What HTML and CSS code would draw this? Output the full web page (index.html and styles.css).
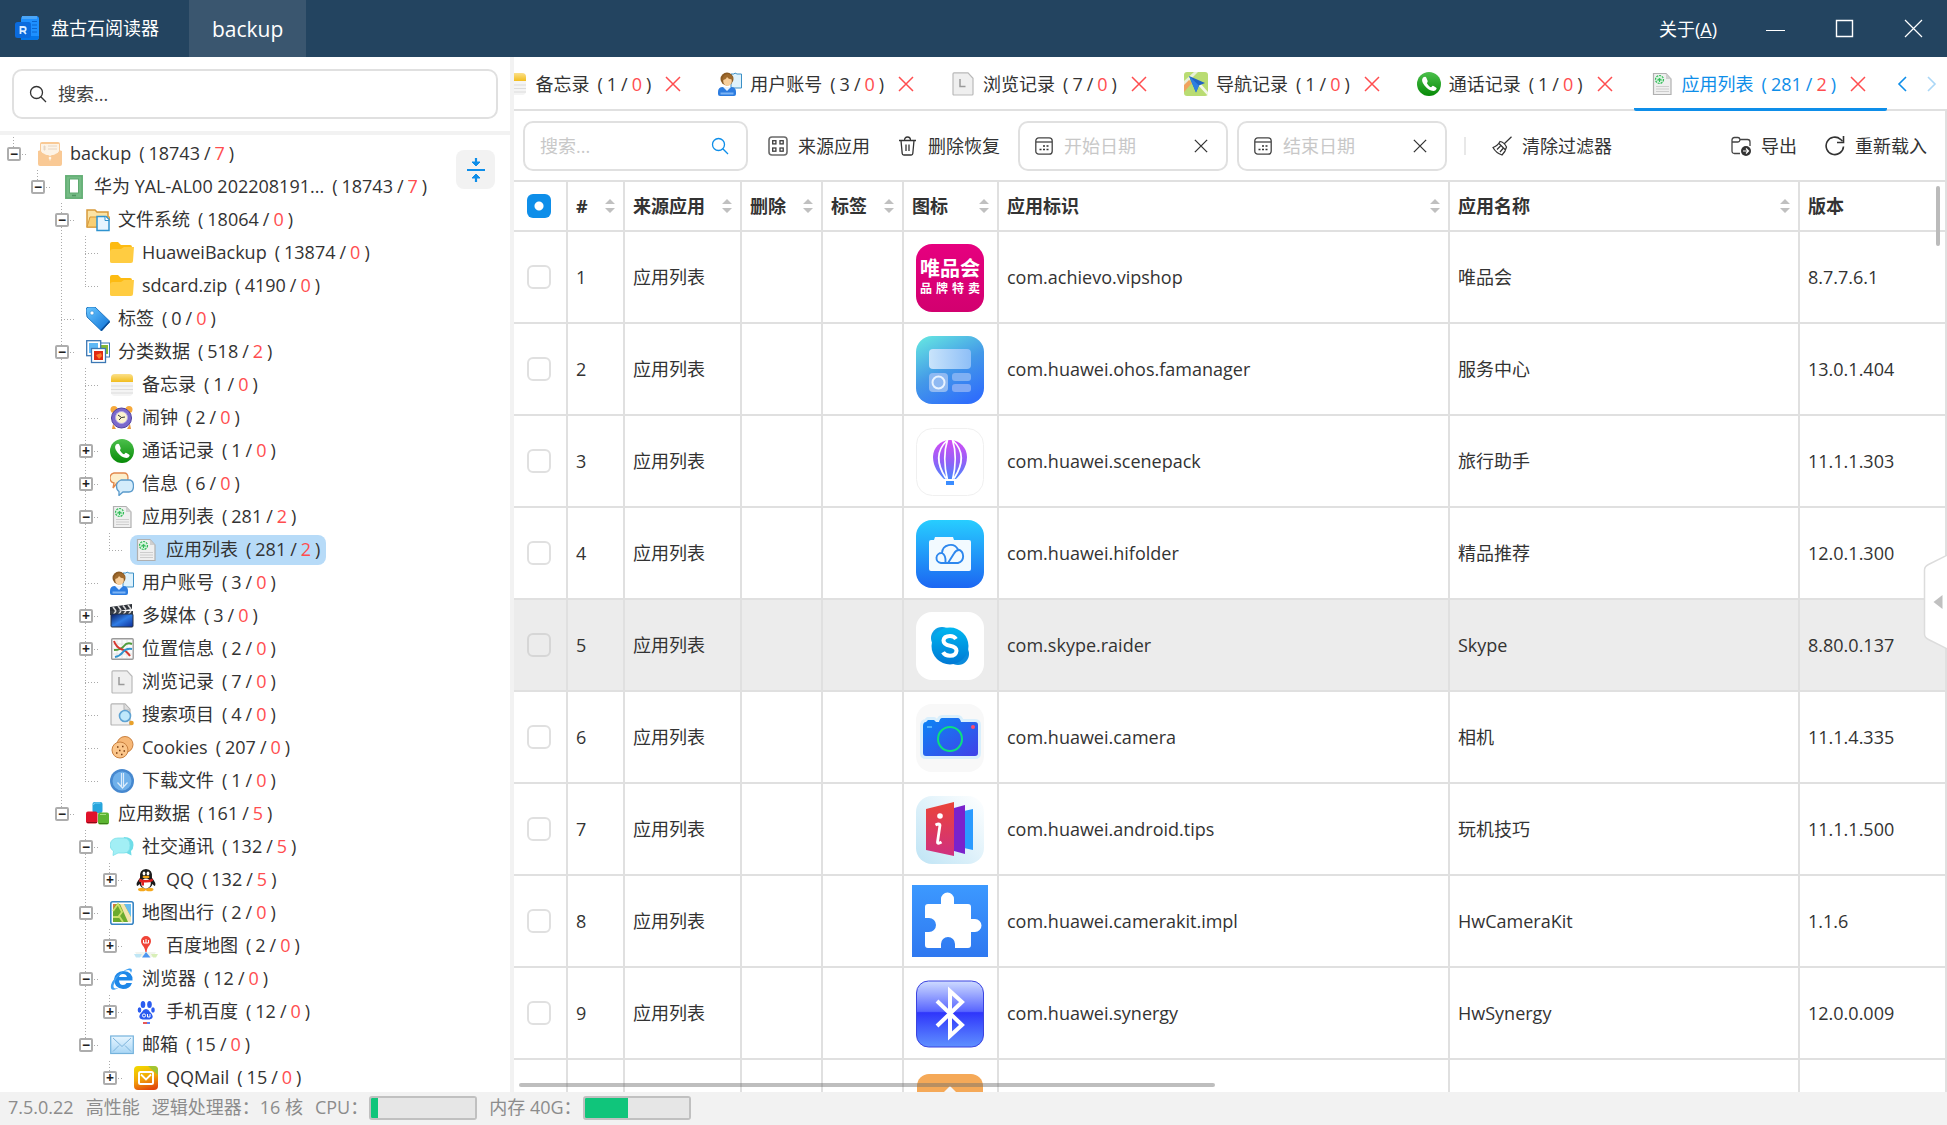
FILE: index.html
```html
<!DOCTYPE html>
<html lang="zh-CN">
<head>
<meta charset="utf-8">
<title>盘古石阅读器</title>
<link rel="stylesheet" href="styles.css">
</head>
<body>
<svg class="sprite" width="0" height="0" aria-hidden="true">
  <defs>
    <linearGradient id="g-blue" x1="0" y1="0" x2="1" y2="1"><stop offset="0" stop-color="#6cc8ff"/><stop offset="1" stop-color="#0a6fd6"/></linearGradient>
    <linearGradient id="g-sky" x1="0" y1="0" x2="0" y2="1"><stop offset="0" stop-color="#e8f6ff"/><stop offset="1" stop-color="#a9d6f5"/></linearGradient>
    <linearGradient id="g-green" x1="0" y1="0" x2="0" y2="1"><stop offset="0" stop-color="#4cc04c"/><stop offset="1" stop-color="#078a07"/></linearGradient>
    <linearGradient id="g-gold" x1="0" y1="0" x2="0" y2="1"><stop offset="0" stop-color="#fbe08a"/><stop offset="1" stop-color="#f2bd1d"/></linearGradient>
    <linearGradient id="g-clap" x1="0" y1="0" x2="1" y2="1"><stop offset="0" stop-color="#0c1c5e"/><stop offset=".5" stop-color="#2f7de6"/><stop offset="1" stop-color="#0d2e9a"/></linearGradient>
    <linearGradient id="g-mail" x1="0.3" y1="0" x2=".6" y2="1"><stop offset="0" stop-color="#f2d500"/><stop offset=".5" stop-color="#f2a60a"/><stop offset="1" stop-color="#e2470a"/></linearGradient>
    <linearGradient id="g-vip" x1="0" y1="0" x2="0" y2="1"><stop offset="0" stop-color="#e6007f"/><stop offset="1" stop-color="#d2006f"/></linearGradient>
    <linearGradient id="g-svc" x1=".2" y1="0" x2=".7" y2="1"><stop offset="0" stop-color="#62dfe2"/><stop offset=".5" stop-color="#4499e8"/><stop offset="1" stop-color="#2f6ffb"/></linearGradient>
    <linearGradient id="g-card" x1="0" y1="0" x2="1" y2="0"><stop offset="0" stop-color="#c9e4fb"/><stop offset="1" stop-color="#8ebff7"/></linearGradient>
    <linearGradient id="g-balloon" gradientUnits="userSpaceOnUse" x1="0" y1="14" x2="0" y2="56"><stop offset="0" stop-color="#d44cf5"/><stop offset=".55" stop-color="#8d63f7"/><stop offset="1" stop-color="#3b8dff"/></linearGradient>
    <linearGradient id="g-cloud" x1="0" y1="0" x2="0" y2="1"><stop offset="0" stop-color="#27cdff"/><stop offset="1" stop-color="#1c66f2"/></linearGradient>
    <linearGradient id="g-skype" x1="0" y1="0" x2="0" y2="1"><stop offset="0" stop-color="#00b7f0"/><stop offset="1" stop-color="#0078d4"/></linearGradient>
    <linearGradient id="g-cam" x1="0" y1="0" x2="1" y2="1"><stop offset="0" stop-color="#0a86f5"/><stop offset="1" stop-color="#4141e8"/></linearGradient>
    <linearGradient id="g-tips" x1="1" y1="0" x2="0" y2="1"><stop offset="0" stop-color="#ffffff"/><stop offset="1" stop-color="#bfe4f5"/></linearGradient>
    <linearGradient id="g-page" x1="0" y1="0" x2="0" y2="1"><stop offset="0" stop-color="#ea4438"/><stop offset="1" stop-color="#d03080"/></linearGradient>
    <linearGradient id="g-puz" x1="0" y1="0" x2="0" y2="1"><stop offset="0" stop-color="#3c99ff"/><stop offset="1" stop-color="#2f78f0"/></linearGradient>
    <linearGradient id="g-bt" x1="0" y1="0" x2="0" y2="1"><stop offset="0" stop-color="#cfdcff"/><stop offset=".46" stop-color="#5865ff"/><stop offset=".48" stop-color="#2f36fb"/><stop offset="1" stop-color="#5f90ff"/></linearGradient>
  </defs>

  <symbol id="i-logo" viewBox="0 0 24 24"><rect x="6" y="0" width="18" height="24" rx="3" fill="#1e90ff"/><path d="M7 0h15v3H7z" fill="#4aa6f8"/><path d="M17 5.500h5M17 9h5M17 12.500h5M17 16h5" stroke="#0a66d0" stroke-width="1"/><path d="M6 20h18v1a3 3 0 0 1-3 3H6z" fill="#0577ea"/><rect x="0" y="6" width="16" height="16" rx="2.500" fill="#0b6bdd"/><path d="M5.500 18v-7h3.200a2 2 0 0 1 0 4.200H5.500m3 0L11 18" fill="none" stroke="#dcecff" stroke-width="1.800"/></symbol>
  <symbol id="i-search" viewBox="0 0 18 18"><circle cx="7.500" cy="7.500" r="6" fill="none" stroke="currentColor" stroke-width="1.300"/><path d="M11.800 11.800L17 17" stroke="currentColor" stroke-width="1.300"/></symbol>
  <symbol id="i-x" viewBox="0 0 16 16"><path d="M1 1l14 14M15 1L1 15" stroke="currentColor" stroke-width="1.500" fill="none"/></symbol>
  <symbol id="i-left" viewBox="0 0 10 16"><path d="M9 1L2 8l7 7" stroke="currentColor" stroke-width="1.600" fill="none"/></symbol>
  <symbol id="i-right" viewBox="0 0 10 16"><path d="M1 1l7 7-7 7" stroke="currentColor" stroke-width="1.600" fill="none"/></symbol>
  <symbol id="i-collapse" viewBox="0 0 24 28"><path d="M3 14h18M12 2v7M12 26v-7" stroke="#0e8ee9" stroke-width="2.200" fill="none"/><path d="M8 6l4 4 4-4zM8 22l4-4 4 4z" fill="#0e8ee9" stroke="#0e8ee9"/></symbol>
  <symbol id="i-sort" viewBox="0 0 10 14"><path d="M5 0l5 5H0zM5 14l5-5H0z" fill="#c0c0c0"/></symbol>

  <symbol id="i-backup" viewBox="0 0 24 24"><path d="M2 2q0-2 2-2h16q2 0 2 2v10H2z" fill="#f9c995"/><path d="M3 2h18v9H3z" fill="#fdf3e6"/><path d="M6 4h1v4H6zM10 4h9M10 7h9" stroke="#e6d6c4" fill="#e6d6c4"/><path d="M0 9l3-1v1q2 4 9 4t9-4V8l3 1v13q0 2-2 2H2q-2 0-2-2z" fill="#f9c995"/><path d="M3 8q1 4 6 4.500L12 14l3-1.500Q20 12 21 8l-3 1H6z" fill="#fdf3e6"/><circle cx="12" cy="16" r="1.300" fill="#fff6ea"/><path d="M11.500 16h1v2.500h-1z" fill="#fff6ea"/></symbol>
  <symbol id="i-phone" viewBox="0 0 24 24"><path d="M3 0h18v24H3z" fill="#74bb84"/><rect x="4" y="1" width="16" height="22" fill="none" stroke="#5fa970"/><rect x="7.500" y="4" width="9" height="14" fill="#fff" stroke="#5fa970"/><path d="M10 20.500h4" stroke="#4f9460" stroke-width="1.500"/></symbol>
  <symbol id="i-files" viewBox="0 0 24 24"><path d="M1 19V2h8l2 2h11v15z" fill="#fbe3a4" stroke="#d79a3b" stroke-width="1.500"/><path d="M1 19L4 9h20l-3 10z" fill="#f8cf74" stroke="#d79a3b"/><path d="M11 8.500h9l3 3v11H11z" fill="#e6f5ff" stroke="#2f93cf" stroke-width="1.500"/><path d="M19 8.500v4h4" fill="#fff" stroke="#2f93cf"/></symbol>
  <symbol id="i-folder" viewBox="0 0 24 24"><path d="M0 3q0-2 2-2h6l3 3h9q2 0 2 2v14H0z" fill="#fdbb12"/><path d="M0 20.500V11q0-3 3-3h8l3-2h10l-1 14q0 2-2 2H2q-2 0-2-1.500z" fill="#ffcc41"/></symbol>
  <symbol id="i-tag" viewBox="0 0 24 24"><path d="M0 3q0-3 3-3h6l15 14.500-8.500 9.500L1 10z" fill="url(#g-blue)" stroke="#0a66b8" stroke-width=".8"/><path d="M15 23.500l8.500-9" stroke="#0b4c96" stroke-width="1.500"/><circle cx="6" cy="6" r="2" fill="#fff" stroke="#2b8ad4" stroke-width=".6"/></symbol>
  <symbol id="i-classify" viewBox="0 0 24 24"><rect x="11" y="3" width="12.500" height="14" fill="#fff" stroke="#3c78b4"/><rect x="14" y="5" width="8" height="9" fill="#84b834"/><rect x=".7" y=".7" width="14" height="15" fill="#fff" stroke="#3c78b4" stroke-width="1.300"/><rect x="3" y="3" width="9" height="10" fill="#5fb8f5"/><rect x="5.500" y="8.500" width="14" height="14" fill="#fff" stroke="#3c78b4" stroke-width="1.300"/><rect x="8" y="11" width="9" height="9" fill="#e02a12"/><path d="M10 15l5-2 1 3-3 3z" fill="#f97a2c"/></symbol>
  <symbol id="i-memo" viewBox="0 0 24 24"><rect x="1" y="1" width="22" height="22" rx="4" fill="#f4f4f4"/><path d="M1 9V5q0-4 4-4h14q4 0 4 4v4z" fill="url(#g-gold)"/><path d="M1 13h22M1 16.500h22M1 20h22" stroke="#dcdcdc"/></symbol>
  <symbol id="i-alarm" viewBox="0 0 24 24"><circle cx="4" cy="3.500" r="3.500" fill="#f6a93b"/><circle cx="19" cy="3.500" r="3.500" fill="#f6a93b"/><path d="M3 18l-1 5h4zM20 18l1 5h-4z" fill="#e89a3e"/><circle cx="11.500" cy="12" r="10" fill="#7a68cc" stroke="#4f3fa0"/><circle cx="11.500" cy="11.500" r="6" fill="#fbf3cf" stroke="#b9ace8"/><path d="M8 9l3.500 2.500L15 11M11.500 11.500L9 14" stroke="#333" fill="none"/></symbol>
  <symbol id="i-call" viewBox="0 0 24 24"><circle cx="12" cy="12" r="12" fill="url(#g-green)"/><path d="M6 5.500q-2.500 3 1.500 8t9 5.500q2 0 3-2 .5-1-.5-1.600l-2.500-1.400q-1-.5-1.600.4l-.8.900q-1.600-.2-4.200-4l.6-1.200q.4-.8 0-1.500L9.200 5.500q-.7-1.500-3.200 0z" fill="#fff"/></symbol>
  <symbol id="i-message" viewBox="0 0 24 24"><path d="M4 1h10q4 0 4 5t-4 5H7l-4 5 1-5Q0 10 0 6t4-5z" fill="#fdeecb" stroke="#e2884c" stroke-width="1.300"/><path d="M11 8h8q4.500 0 4.500 6T19 20h-6l-4 3.500v-4Q6.500 18 6.500 14T11 8z" fill="#d4ecfb" stroke="#5a9acb" stroke-width="1.300"/></symbol>
  <symbol id="i-applist" viewBox="0 0 24 24"><path d="M3.500 1.500h12.500L21 7v15.500H3.500z" fill="#efefef" stroke="#b0b0b0" stroke-width="1.200"/><path d="M16 1.500V7h5z" fill="#cfcfcf"/><circle cx="9.500" cy="7.500" r="4" fill="#d4f4dc" stroke="#31b957" stroke-width="1.200" stroke-dasharray="2 1"/><path d="M7.500 8q2-3 4 0zM9.500 6.500v3.500" stroke="#31b957" fill="none"/><path d="M6 14.500h13M6 17h13M6 19.500h13" stroke="#cdcdcd"/></symbol>
  <symbol id="i-account" viewBox="0 0 24 24"><path d="M13 2h3l1-1 2 1h4.500v14H13z" fill="#dff2fc" stroke="#3c90c6"/><path d="M0 20q0-5 5-5h8q5 0 5 5v2q0 2-2 2H2q-2 0-2-2z" fill="#2c7ce0"/><path d="M5 15l4 4 4-4z" fill="#e9f3ff"/><path d="M2.500 21.500h13" stroke="#7db4f5" stroke-width="2"/><circle cx="9" cy="7" r="6.500" fill="#8a5a24"/><ellipse cx="9.500" cy="9" rx="4.300" ry="5" fill="#f8cf9c"/><path d="M4 8q1-6 6-6 5 1 5 5-4 1-6-2-1 3-5 3z" fill="#a06a2c"/></symbol>
  <symbol id="i-media" viewBox="0 0 24 24"><path d="M0 3l22-3v5L0 8z" fill="#2d3138"/><path d="M3 3l3 4M8 2l3 4M13 1.500l3 4M18 1l3 4" stroke="#d8d8d8" stroke-width="1.600"/><rect x="0" y="7" width="23" height="4" fill="#3a3f46"/><path d="M3 11l3-4M8 11l3-4M13 11l3-4M18 11l3-4" stroke="#d8d8d8" stroke-width="1.400"/><rect x="1" y="10" width="22" height="13" rx="1" fill="url(#g-clap)" stroke="#27313f"/></symbol>
  <symbol id="i-location" viewBox="0 0 24 24"><rect x="1.700" y="1.700" width="21.500" height="20.500" rx="1" fill="#fafafa" stroke="#9b9b9b" stroke-width="1.400"/><path d="M7 3v18M12 3v18M17 3v18M3 7h19M3 12h19M3 17h19" stroke="#dedede" stroke-width=".8"/><path d="M4 13q7 0 10-4t8-2" fill="none" stroke="#4f9c3b" stroke-width="2"/><path d="M4 4q2 6 7 8 6 2 9 7" fill="none" stroke="#d5392f" stroke-width="2"/><path d="M5 20q5-1 8-5t9-3" fill="none" stroke="#2f93cf" stroke-width="2"/></symbol>
  <symbol id="i-history" viewBox="0 0 24 24"><path d="M3 .8h14l5 5.500V22q0 1-1 1H3q-1 0-1-1V2q0-1.200 1-1.200z" fill="#efefef" stroke="#b9b9b9" stroke-width="1.200"/><path d="M9 7v7.500h5.500" fill="none" stroke="#9a9a9a" stroke-width="1.500"/></symbol>
  <symbol id="i-find" viewBox="0 0 24 24"><path d="M2 .8h13l5 5.500V22H2q-1 0-1-1V2q0-1.200 1-1.200z" fill="#f0f0f0" stroke="#b5b5b5" stroke-width="1.200"/><path d="M14 1v6h6" fill="#ddd" stroke="#b5b5b5"/><circle cx="15" cy="13" r="5.500" fill="#bfe8fb" stroke="#5fa3d3" stroke-width="1.600"/><circle cx="21.500" cy="20" r="2.300" fill="#e8a02a"/></symbol>
  <symbol id="i-cookie" viewBox="0 0 24 24"><circle cx="15" cy="8.500" r="8" fill="#f7b877" stroke="#c9803f"/><circle cx="10" cy="14" r="8" fill="#fbc68b" stroke="#c9803f"/><path d="M7 11h1.500M12 10.500h1.500M9 14.500h1.500M13.500 15h1.500M6 17h1.500M11 18.500h1.500" stroke="#7a3d12" stroke-width="1.300"/></symbol>
  <symbol id="i-download" viewBox="0 0 24 24"><circle cx="12" cy="12" r="12" fill="#4688cf"/><circle cx="12" cy="12" r="9.500" fill="#6fb0ea"/><path d="M11.500 4v14M13.500 4v14M7.500 13.500l5 5.500 5-5.500" stroke="#dcecfb" stroke-width="1.200" fill="none"/></symbol>
  <symbol id="i-appdata" viewBox="0 0 24 24"><rect x="6.500" y="0" width="10" height="11" rx="2" fill="#27a5dc"/><path d="M7.500 3q0-2 2-2h5" stroke="#7fd3f5" fill="none"/><rect x="0" y="9.500" width="11.500" height="12" rx="2" fill="#e0122a"/><path d="M1 20.500h10" stroke="#8d0b18"/><rect x="12" y="10.500" width="11" height="12" rx="2" fill="#5cb531"/><path d="M13 21.500h9" stroke="#3b7d18"/><path d="M14 12.500h6" stroke="#a4e07a"/></symbol>
  <symbol id="i-social" viewBox="0 0 24 24"><path d="M14 2q9 0 9.500 8 0 4-2.500 6l.500 4.500-5-2.500H10z" fill="#6fdde8"/><path d="M8 3h6q6 0 6 7.500T14 18H8l-5 2.500.5-4.500Q0 14 0 10q1-7 8-7z" fill="#a2eff5" stroke="#7cdfe9" stroke-width=".8"/></symbol>
  <symbol id="i-qq" viewBox="0 0 24 24"><ellipse cx="8" cy="21.500" rx="4" ry="1.800" fill="#f5a81c"/><ellipse cx="15.500" cy="21.500" rx="4" ry="1.800" fill="#f5a81c"/><path d="M6 10Q1.500 15 3 18q1 0 2.500-2 1 4 6.500 4.500 5.500-.5 6.500-4.500 1.500 2 2.500 2 1.500-3-3-8Q19 1.500 12 1 5 1.500 6 10z" fill="#1b1b1b"/><ellipse cx="12" cy="15.500" rx="4.800" ry="5" fill="#fff"/><ellipse cx="10" cy="5.500" rx="1.400" ry="2" fill="#fff"/><ellipse cx="14" cy="5.500" rx="1.400" ry="2" fill="#fff"/><ellipse cx="12" cy="9" rx="3.500" ry="1.200" fill="#f5a81c"/><path d="M5.500 10.500q6.500 3 13 0l.5 2.500q-4 2-9 1.500v3H7.500v-3l-2.500-1z" fill="#e02020"/></symbol>
  <symbol id="i-map" viewBox="0 0 24 24"><rect x=".8" y=".8" width="22.400" height="22.400" rx="2" fill="#fff" stroke="#3885c4" stroke-width="1.600"/><rect x="3" y="3" width="18" height="18" fill="#6cab2e"/><path d="M14 3h7v13z" fill="#66bdf0"/><path d="M10 3h4l7 13v5h-3z" fill="#f5e5ae"/><path d="M3 3h3l-3 5z" fill="#dd7a3b"/><path d="M3 10l5-7 4 8-3 4 4 6M3 16h6" fill="none" stroke="#c9df6a" stroke-width="1.800"/></symbol>
  <symbol id="i-baidumap" viewBox="0 0 24 24"><path d="M1 18h21l-3 5H4z" fill="#f2f4ee"/><path d="M0 20h8l-2 3.500H2z" fill="#bfe6f5"/><path d="M17 20h7l-2 3.500h-3z" fill="#d8efb8"/><path d="M8 23.500l4-5.500 4.500 5.500z" fill="#4c96f0"/><path d="M12 2a5 5 0 0 1 5 5C17 11.500 13 12 12.600 18h-1.200C11 12 7 11.500 7 7a5 5 0 0 1 5-5z" fill="#f04438"/><path d="M9.500 6v3h5V6M12 5v4" stroke="#fff" fill="none"/></symbol>
  <symbol id="i-ie" viewBox="0 0 24 24"><path d="M4.500 13.500h18q.5-9-9-9.500Q5 4.500 4 12.500q0 8.500 9 9.500 7 0 9-6h-5.500q-1 2-3.500 2-3.500 0-4-4.500zM9 10q.8-2.800 4-3 3.300.2 4 3z" fill="#1e87e8" fill-rule="evenodd"/><path d="M21 6q2.500-5-2-4.500-3 .5-7 3.500Q3 11 1 18q-1 6 4 4.500 2-.5 4-2-6 2.500-5.500-2Q5 11 13 5q7-4.500 8 1z" fill="#3fa0f2"/></symbol>
  <symbol id="i-baidu" viewBox="0 0 24 24"><ellipse cx="9" cy="4.500" rx="2.300" ry="3.500" fill="#2b5cf0"/><ellipse cx="15.500" cy="4.500" rx="2.300" ry="3.500" fill="#2b5cf0"/><ellipse cx="5.500" cy="10" rx="1.800" ry="2.800" fill="#2b5cf0"/><ellipse cx="19" cy="10" rx="1.800" ry="2.800" fill="#2b5cf0"/><path d="M12 9q2.500 0 4 3 3.500 3 2.500 5.500-1 2.500-6.500 2-5.500.5-6.500-2Q4.500 15 8 12q1.500-3 4-3z" fill="#2b5cf0"/><circle cx="10" cy="15.500" r="1.600" fill="none" stroke="#fff"/><path d="M13.500 14v3h2.500v-3" stroke="#fff" fill="none"/><path d="M13 23h3" stroke="#2b5cf0" stroke-width="1.500"/><path d="M9 23h4" stroke="#e02020" stroke-width="1.500"/></symbol>
  <symbol id="i-envelope" viewBox="0 0 24 24"><rect x=".7" y="3" width="22.600" height="17.500" fill="url(#g-sky)" stroke="#74b2dc" stroke-width="1.200"/><path d="M3 5l9 8.500L21 5M3 18.500l6-6M21 18.500l-6-6" fill="none" stroke="#7db4dc"/></symbol>
  <symbol id="i-qqmail" viewBox="0 0 24 24"><rect width="24" height="24" rx="4" fill="url(#g-mail)"/><path d="M14 0h6q4 0 4 4v5z" fill="#8dc63f" opacity=".8"/><rect x="5" y="6" width="14" height="12" rx="1.500" fill="none" stroke="#fff" stroke-width="2"/><path d="M7 8.500l5 5 5-5" fill="none" stroke="#fff" stroke-width="1.800"/></symbol>
  <symbol id="i-nav" viewBox="0 0 24 24"><rect width="24" height="24" rx="3" fill="#b9dc72"/><path d="M0 9L10 0h4L0 14z" fill="#e8f0d8"/><path d="M13 12h4l7 8v4z" fill="#f3f7e6"/><path d="M0 13l5-5 3 3-8 9z" fill="#f0a35e"/><path d="M5 4l16 7-6 2.500-3 7z" fill="#1f62c4"/><path d="M5 4l10 9.500-3 7z" fill="#2f7fe0"/></symbol>

  <symbol id="i-apps" viewBox="0 0 20 20"><rect x="1" y="1" width="18" height="18" rx="3" fill="none" stroke="#6a6a6a" stroke-width="1.600"/><g fill="none" stroke="#3d3d3d" stroke-width="1.300"><rect x="4.700" y="4.700" width="3.200" height="3.200"/><rect x="12" y="4.700" width="3.200" height="3.200"/><rect x="4.700" y="12" width="3.200" height="3.200"/><rect x="12" y="12" width="3.200" height="3.200"/></g></symbol>
  <symbol id="i-trash" viewBox="0 0 20 20"><path d="M1 4.500h17M6.500 4.500q0-3.500 3-3.500t3 3.500M3 4.500l1.200 13q.1 1.500 1.600 1.500h7.400q1.500 0 1.600-1.500l1.200-13M8 8.500v6.500M11 8.500v6.500" fill="none" stroke="#333" stroke-width="1.300"/></symbol>
  <symbol id="i-cal" viewBox="0 0 18 18"><rect x=".8" y=".8" width="16.400" height="16.400" rx="3" fill="none" stroke="#444" stroke-width="1.300"/><path d="M1 5h16" stroke="#444" stroke-width="1.300"/><path d="M8 9h2M11.500 9h2M4.500 12.500h2M8 12.500h2M11.500 12.500h2" stroke="#333" stroke-width="1.700"/></symbol>
  <symbol id="i-broom" viewBox="0 0 20 20"><path d="M19.500.800l-7.500 7.200M8 5.500q4 .5 6.500 5.500-1 4.500-4.500 8Q4 17 1 11.500 5.500 10 8 5.500zM7 7.500l6.500 6.500M5 13.500l3.500-3.500M8 16l3-3.500" fill="none" stroke="#333" stroke-width="1.200"/></symbol>
  <symbol id="i-export" viewBox="0 0 20 20"><path d="M9 17.500H3.500q-2.500 0-2.500-2.500V4q0-2.500 2.500-2.500h3.500q1.500 0 2 2h7.500q2.500 0 2.500 2.500v4M1 6h6q1.500 0 2-2" fill="none" stroke="#444" stroke-width="1.300"/><circle cx="15" cy="15" r="5" fill="#333"/><path d="M12 15h5.500M15 12.500l2.500 2.500-2.500 2.500" stroke="#fff" fill="none" stroke-width="1.200"/></symbol>
  <symbol id="i-reload" viewBox="0 0 20 20"><path d="M18.500 10.500a8.700 8.700 0 1 1-3-7.200l2 2" fill="none" stroke="#333" stroke-width="1.600"/><path d="M18.500 0v6.500H12" fill="none" stroke="#333" stroke-width="1.600"/></symbol>

  <symbol id="a-vip" viewBox="0 -1 76 72"><rect x="4" y="2" width="68" height="68" rx="16" fill="url(#g-vip)"/></symbol>
  <symbol id="a-service" viewBox="0 -1 76 72"><rect x="4" y="2" width="68" height="68" rx="16" fill="url(#g-svc)"/><rect x="17" y="15" width="42" height="20" rx="4" fill="url(#g-card)"/><rect x="17" y="39" width="19" height="19" rx="4" fill="#8fb9f2"/><circle cx="26.500" cy="48.500" r="6" fill="none" stroke="#e8f3ff" stroke-width="2"/><rect x="40" y="39" width="19" height="8" rx="3" fill="#7fb0f3"/><rect x="40" y="50" width="19" height="8" rx="3" fill="#7fa8f5"/></symbol>
  <symbol id="a-balloon" viewBox="0 -1 76 72"><rect x="4.500" y="2.500" width="67" height="67" rx="16" fill="#fff" stroke="#f0f0f0"/><path d="M38 14c-10 0-17 8-17 17 0 10 6 17 11 22h12c5-5 11-12 11-22 0-9-7-17-17-17z" fill="url(#g-balloon)"/><path d="M35 14.500q-16 15-1 38M41 14.500q16 15 1 38M35.500 14q-5.500 17 0 40M40.500 14q5.500 17 0 40" fill="none" stroke="#fff" stroke-width="1.700"/><path d="M30 53h16v2H30z" fill="#fff"/><rect x="34" y="55" width="8" height="4" fill="#3b8dff"/></symbol>
  <symbol id="a-cloud" viewBox="0 -1 76 72"><rect x="4" y="2" width="68" height="68" rx="16" fill="url(#g-cloud)"/><path d="M17 24q0-2 2-2h3l1-3h18l1 3h15q2 0 2 2v27q0 2-2 2H19q-2 0-2-2z" fill="#f2faff"/><path d="M31 45h-2a5 5 0 0 1 1-10 8.500 8.500 0 0 1 16-3.500 7 7 0 0 1 0 13.500H31M36 45l6-9.500q2-3.500 5-3.500M30 35q4 2 3.500 9.500" fill="none" stroke="#2d87ee" stroke-width="1.900"/></symbol>
  <symbol id="a-skype" viewBox="0 -1 76 72"><rect x="4" y="2" width="68" height="68" rx="16" fill="#fff"/><circle cx="30" cy="28" r="11" fill="#0aa0e6"/><circle cx="46" cy="44" r="11" fill="#0a8bdc"/><circle cx="38" cy="36" r="18.500" fill="url(#g-skype)"/><path d="M44 29q-2-3-6-3-6 0-6.500 4.500 0 4 6.500 5.200 6.500 1.300 6.500 5-.5 5-6.500 5-5 0-7-3.500" fill="none" stroke="#fff" stroke-width="4"/></symbol>
  <symbol id="a-camera" viewBox="0 -1 76 72"><rect x="4" y="2" width="68" height="68" rx="16" fill="#f8f8f8"/><path d="M11 24q0-4 3-4l2-2h6l2 2h3q1-4 3-4h16q2 0 3 4h14q3 0 3 3v28q0 3-3 3H14q-3 0-3-3z" fill="none" stroke="#d9effc" stroke-width="6" stroke-linejoin="round"/><path d="M11 24q0-4 3-4l2-2h6l2 2h3q1-4 3-4h16q2 0 3 4h14q3 0 3 3v28q0 3-3 3H14q-3 0-3-3z" fill="url(#g-cam)"/><circle cx="38" cy="37" r="12" fill="none" stroke="#0be07f" stroke-width="2"/><circle cx="61" cy="25" r="2" fill="#ff4a6a"/><path d="M15 25h5" stroke="#4fb1ff" stroke-width="2"/></symbol>
  <symbol id="a-tips" viewBox="0 -1 76 72"><rect x="4" y="2" width="68" height="68" rx="16" fill="url(#g-tips)"/><path d="M52 17l9-2v41l-9-2z" fill="#2a9bff"/><path d="M42 14l11-3v49l-11-3z" fill="#7a22cc"/><path d="M14 15l28-7v54l-28-6z" fill="url(#g-page)"/><circle cx="28" cy="22" r="2.800" fill="#fff"/><path d="M23.500 31q4-2 4.500 0l-2.500 17q0 2.500 4 0" fill="none" stroke="#fff" stroke-width="2.800"/></symbol>
  <symbol id="a-puzzle" viewBox="0 0 76 72"><rect width="76" height="72" fill="url(#g-puz)"/><path d="M13 22q0-3 3-3h13V14a6.500 6.500 0 0 1 13 0v5h14q3 0 3 3v12h4a6.500 6.500 0 0 1 0 13h-4v13q0 3-3 3H43v-4a7 7 0 0 0-14 0v4H16q-3 0-3-3V47h4a7 7 0 0 0 0-14h-4z" fill="#fff"/></symbol>
  <symbol id="a-bluetooth" viewBox="0 -1 76 72"><rect x="4.500" y="3" width="67" height="66" rx="12" fill="url(#g-bt)" stroke="#3a43e0"/><path d="M25 23l25 24-12 11V13l12 11L25 48" fill="none" stroke="#fff" stroke-width="4"/></symbol>
  <symbol id="a-orange" viewBox="0 -1 76 72"><rect x="5" y="4" width="66" height="66" rx="12" fill="#f5a958"/><path d="M38 16l16 16H22z" fill="#f7f7f7"/></symbol>
</svg>

<div class="app">
  <header class="titlebar">
    <div class="brand"><svg class="ico"><use href="#i-logo"/></svg><span>盘古石阅读器</span></div>
    <div class="case-tab">backup</div>
    <div class="window-tools">
      <button class="about">关于(<u>A</u>)</button>
      <button class="win" aria-label="最小化"><svg viewBox="0 0 20 20"><path d="M0 11.500h19" stroke="#fff"/></svg></button>
      <button class="win" aria-label="最大化"><svg viewBox="0 0 20 20"><path d="M1.500 1.500h16v16h-16z" fill="none" stroke="#fff" stroke-width="1.400"/></svg></button>
      <button class="win" aria-label="关闭"><svg viewBox="0 0 20 20"><path d="M1 1l17 17M18 1L1 18" stroke="#fff" stroke-width="1.200"/></svg></button>
    </div>
  </header>

  <main class="workspace">
    <aside class="sidebar">
      <div class="side-search">
        <label class="field"><svg class="ico18"><use href="#i-search"/></svg><input class="dark-hint" type="text" placeholder="搜索..." aria-label="搜索"></label>
      </div>
      <div class="tree-area">
        <ul class="tree">
          <li><div class="row"><button class="toggle" aria-label="折叠">−</button><a href="#" class="node"><svg class="ico"><use href="#i-backup"/></svg><span>backup</span><span class="count">(<b>18743</b>/<em>7</em>)</span></a></div>
            <ul>
              <li><div class="row"><button class="toggle" aria-label="折叠">−</button><a href="#" class="node"><svg class="ico"><use href="#i-phone"/></svg><span>华为 YAL-AL00 202208191...</span><span class="count">(<b>18743</b>/<em>7</em>)</span></a></div>
                <ul>
                  <li><div class="row"><button class="toggle" aria-label="折叠">−</button><a href="#" class="node"><svg class="ico"><use href="#i-files"/></svg><span>文件系统</span><span class="count">(<b>18064</b>/<em>0</em>)</span></a></div>
                    <ul>
                      <li><div class="row leaf"><a href="#" class="node"><svg class="ico"><use href="#i-folder"/></svg><span>HuaweiBackup</span><span class="count">(<b>13874</b>/<em>0</em>)</span></a></div></li>
                      <li><div class="row leaf"><a href="#" class="node"><svg class="ico"><use href="#i-folder"/></svg><span>sdcard.zip</span><span class="count">(<b>4190</b>/<em>0</em>)</span></a></div></li>
                    </ul>
                  </li>
                  <li><div class="row leaf"><a href="#" class="node"><svg class="ico"><use href="#i-tag"/></svg><span>标签</span><span class="count">(<b>0</b>/<em>0</em>)</span></a></div></li>
                  <li><div class="row"><button class="toggle" aria-label="折叠">−</button><a href="#" class="node"><svg class="ico"><use href="#i-classify"/></svg><span>分类数据</span><span class="count">(<b>518</b>/<em>2</em>)</span></a></div>
                    <ul>
                      <li><div class="row leaf"><a href="#" class="node"><svg class="ico"><use href="#i-memo"/></svg><span>备忘录</span><span class="count">(<b>1</b>/<em>0</em>)</span></a></div></li>
                      <li><div class="row leaf"><a href="#" class="node"><svg class="ico"><use href="#i-alarm"/></svg><span>闹钟</span><span class="count">(<b>2</b>/<em>0</em>)</span></a></div></li>
                      <li><div class="row"><button class="toggle" aria-label="展开">+</button><a href="#" class="node"><svg class="ico"><use href="#i-call"/></svg><span>通话记录</span><span class="count">(<b>1</b>/<em>0</em>)</span></a></div></li>
                      <li><div class="row"><button class="toggle" aria-label="展开">+</button><a href="#" class="node"><svg class="ico"><use href="#i-message"/></svg><span>信息</span><span class="count">(<b>6</b>/<em>0</em>)</span></a></div></li>
                      <li><div class="row"><button class="toggle" aria-label="折叠">−</button><a href="#" class="node"><svg class="ico"><use href="#i-applist"/></svg><span>应用列表</span><span class="count">(<b>281</b>/<em>2</em>)</span></a></div>
                        <ul>
                          <li><div class="row leaf"><a href="#" class="node selected"><svg class="ico"><use href="#i-applist"/></svg><span>应用列表</span><span class="count">(<b>281</b>/<em>2</em>)</span></a></div></li>
                        </ul>
                      </li>
                      <li><div class="row leaf"><a href="#" class="node"><svg class="ico"><use href="#i-account"/></svg><span>用户账号</span><span class="count">(<b>3</b>/<em>0</em>)</span></a></div></li>
                      <li><div class="row"><button class="toggle" aria-label="展开">+</button><a href="#" class="node"><svg class="ico"><use href="#i-media"/></svg><span>多媒体</span><span class="count">(<b>3</b>/<em>0</em>)</span></a></div></li>
                      <li><div class="row"><button class="toggle" aria-label="展开">+</button><a href="#" class="node"><svg class="ico"><use href="#i-location"/></svg><span>位置信息</span><span class="count">(<b>2</b>/<em>0</em>)</span></a></div></li>
                      <li><div class="row leaf"><a href="#" class="node"><svg class="ico"><use href="#i-history"/></svg><span>浏览记录</span><span class="count">(<b>7</b>/<em>0</em>)</span></a></div></li>
                      <li><div class="row leaf"><a href="#" class="node"><svg class="ico"><use href="#i-find"/></svg><span>搜索项目</span><span class="count">(<b>4</b>/<em>0</em>)</span></a></div></li>
                      <li><div class="row leaf"><a href="#" class="node"><svg class="ico"><use href="#i-cookie"/></svg><span>Cookies</span><span class="count">(<b>207</b>/<em>0</em>)</span></a></div></li>
                      <li><div class="row leaf"><a href="#" class="node"><svg class="ico"><use href="#i-download"/></svg><span>下载文件</span><span class="count">(<b>1</b>/<em>0</em>)</span></a></div></li>
                    </ul>
                  </li>
                  <li><div class="row"><button class="toggle" aria-label="折叠">−</button><a href="#" class="node"><svg class="ico"><use href="#i-appdata"/></svg><span>应用数据</span><span class="count">(<b>161</b>/<em>5</em>)</span></a></div>
                    <ul>
                      <li><div class="row"><button class="toggle" aria-label="折叠">−</button><a href="#" class="node"><svg class="ico"><use href="#i-social"/></svg><span>社交通讯</span><span class="count">(<b>132</b>/<em>5</em>)</span></a></div>
                        <ul><li><div class="row"><button class="toggle" aria-label="展开">+</button><a href="#" class="node"><svg class="ico"><use href="#i-qq"/></svg><span>QQ</span><span class="count">(<b>132</b>/<em>5</em>)</span></a></div></li></ul>
                      </li>
                      <li><div class="row"><button class="toggle" aria-label="折叠">−</button><a href="#" class="node"><svg class="ico"><use href="#i-map"/></svg><span>地图出行</span><span class="count">(<b>2</b>/<em>0</em>)</span></a></div>
                        <ul><li><div class="row"><button class="toggle" aria-label="展开">+</button><a href="#" class="node"><svg class="ico"><use href="#i-baidumap"/></svg><span>百度地图</span><span class="count">(<b>2</b>/<em>0</em>)</span></a></div></li></ul>
                      </li>
                      <li><div class="row"><button class="toggle" aria-label="折叠">−</button><a href="#" class="node"><svg class="ico"><use href="#i-ie"/></svg><span>浏览器</span><span class="count">(<b>12</b>/<em>0</em>)</span></a></div>
                        <ul><li><div class="row"><button class="toggle" aria-label="展开">+</button><a href="#" class="node"><svg class="ico"><use href="#i-baidu"/></svg><span>手机百度</span><span class="count">(<b>12</b>/<em>0</em>)</span></a></div></li></ul>
                      </li>
                      <li><div class="row"><button class="toggle" aria-label="折叠">−</button><a href="#" class="node"><svg class="ico"><use href="#i-envelope"/></svg><span>邮箱</span><span class="count">(<b>15</b>/<em>0</em>)</span></a></div>
                        <ul><li><div class="row"><button class="toggle" aria-label="展开">+</button><a href="#" class="node"><svg class="ico"><use href="#i-qqmail"/></svg><span>QQMail</span><span class="count">(<b>15</b>/<em>0</em>)</span></a></div></li></ul>
                      </li>
                    </ul>
                  </li>
                </ul>
              </li>
            </ul>
          </li>
        </ul>
        <button class="collapse-all" aria-label="全部折叠"><svg><use href="#i-collapse"/></svg></button>
      </div>
    </aside>

    <section class="content">
      <nav class="tabbar">
        <div class="tabs">
          <div class="tab"><svg class="ico"><use href="#i-memo"/></svg><a href="#">备忘录<span class="count">(<b>1</b>/<em>0</em>)</span></a><button class="close" aria-label="关闭"><svg><use href="#i-x"/></svg></button></div>
          <div class="tab"><svg class="ico"><use href="#i-account"/></svg><a href="#">用户账号<span class="count">(<b>3</b>/<em>0</em>)</span></a><button class="close" aria-label="关闭"><svg><use href="#i-x"/></svg></button></div>
          <div class="tab"><svg class="ico"><use href="#i-history"/></svg><a href="#">浏览记录<span class="count">(<b>7</b>/<em>0</em>)</span></a><button class="close" aria-label="关闭"><svg><use href="#i-x"/></svg></button></div>
          <div class="tab"><svg class="ico"><use href="#i-nav"/></svg><a href="#">导航记录<span class="count">(<b>1</b>/<em>0</em>)</span></a><button class="close" aria-label="关闭"><svg><use href="#i-x"/></svg></button></div>
          <div class="tab"><svg class="ico"><use href="#i-call"/></svg><a href="#">通话记录<span class="count">(<b>1</b>/<em>0</em>)</span></a><button class="close" aria-label="关闭"><svg><use href="#i-x"/></svg></button></div>
          <div class="tab active"><svg class="ico"><use href="#i-applist"/></svg><a href="#">应用列表<span class="count">(<b>281</b>/<em>2</em>)</span></a><button class="close" aria-label="关闭"><svg><use href="#i-x"/></svg></button></div>
        </div>
        <div class="tab-scroll">
          <button aria-label="向左"><svg><use href="#i-left"/></svg></button>
          <button class="off" aria-label="向右" disabled><svg><use href="#i-right"/></svg></button>
        </div>
      </nav>

      <div class="panel">
        <div class="toolbar">
          <label class="field table-search"><input type="text" placeholder="搜索..." aria-label="搜索"><svg class="ico18 blue"><use href="#i-search"/></svg></label>
          <div class="tool-group">
            <button class="tool"><svg><use href="#i-apps"/></svg>来源应用</button>
            <button class="tool"><svg><use href="#i-trash"/></svg>删除恢复</button>
          </div>
          <div class="dates">
            <label class="field date"><svg class="ico18"><use href="#i-cal"/></svg><input type="text" placeholder="开始日期" aria-label="开始日期"><svg class="clear"><use href="#i-x"/></svg></label>
            <label class="field date"><svg class="ico18"><use href="#i-cal"/></svg><input type="text" placeholder="结束日期" aria-label="结束日期"><svg class="clear"><use href="#i-x"/></svg></label>
          </div>
          <span class="divider"></span>
          <button class="tool"><svg><use href="#i-broom"/></svg>清除过滤器</button>
          <div class="tool-group end">
            <button class="tool"><svg><use href="#i-export"/></svg>导出</button>
            <button class="tool"><svg><use href="#i-reload"/></svg>重新载入</button>
          </div>
        </div>

        <div class="grid">
          <table>
            <colgroup><col class="c-check"><col class="c-num"><col class="c-src"><col class="c-flag"><col class="c-flag"><col class="c-icon"><col class="c-id"><col class="c-name"><col></colgroup>
            <thead>
              <tr>
                <th class="check"><input type="checkbox" class="all" aria-label="全选"></th>
                <th><div>#<svg><use href="#i-sort"/></svg></div></th>
                <th><div>来源应用<svg><use href="#i-sort"/></svg></div></th>
                <th><div>删除<svg><use href="#i-sort"/></svg></div></th>
                <th><div>标签<svg><use href="#i-sort"/></svg></div></th>
                <th><div>图标<svg><use href="#i-sort"/></svg></div></th>
                <th><div>应用标识<svg><use href="#i-sort"/></svg></div></th>
                <th><div>应用名称<svg><use href="#i-sort"/></svg></div></th>
                <th><div>版本</div></th>
              </tr>
            </thead>
            <tbody>
              <tr><td class="check"><input type="checkbox" aria-label="选择 1"></td><td>1</td><td>应用列表</td><td></td><td></td><td><div class="app-icon"><svg><use href="#a-vip"/></svg><span class="vip"><span>唯品会</span><small><i>品</i><i>牌</i><i>特</i><i>卖</i></small></span></div></td><td>com.achievo.vipshop</td><td>唯品会</td><td>8.7.7.6.1</td></tr>
              <tr><td class="check"><input type="checkbox" aria-label="选择 2"></td><td>2</td><td>应用列表</td><td></td><td></td><td><div class="app-icon"><svg><use href="#a-service"/></svg></div></td><td>com.huawei.ohos.famanager</td><td>服务中心</td><td>13.0.1.404</td></tr>
              <tr><td class="check"><input type="checkbox" aria-label="选择 3"></td><td>3</td><td>应用列表</td><td></td><td></td><td><div class="app-icon"><svg><use href="#a-balloon"/></svg></div></td><td>com.huawei.scenepack</td><td>旅行助手</td><td>11.1.1.303</td></tr>
              <tr><td class="check"><input type="checkbox" aria-label="选择 4"></td><td>4</td><td>应用列表</td><td></td><td></td><td><div class="app-icon"><svg><use href="#a-cloud"/></svg></div></td><td>com.huawei.hifolder</td><td>精品推荐</td><td>12.0.1.300</td></tr>
              <tr class="hover"><td class="check"><input type="checkbox" aria-label="选择 5"></td><td>5</td><td>应用列表</td><td></td><td></td><td><div class="app-icon"><svg><use href="#a-skype"/></svg></div></td><td>com.skype.raider</td><td>Skype</td><td>8.80.0.137</td></tr>
              <tr><td class="check"><input type="checkbox" aria-label="选择 6"></td><td>6</td><td>应用列表</td><td></td><td></td><td><div class="app-icon"><svg><use href="#a-camera"/></svg></div></td><td>com.huawei.camera</td><td>相机</td><td>11.1.4.335</td></tr>
              <tr><td class="check"><input type="checkbox" aria-label="选择 7"></td><td>7</td><td>应用列表</td><td></td><td></td><td><div class="app-icon"><svg><use href="#a-tips"/></svg></div></td><td>com.huawei.android.tips</td><td>玩机技巧</td><td>11.1.1.500</td></tr>
              <tr><td class="check"><input type="checkbox" aria-label="选择 8"></td><td>8</td><td>应用列表</td><td></td><td></td><td><div class="app-icon"><svg><use href="#a-puzzle"/></svg></div></td><td>com.huawei.camerakit.impl</td><td>HwCameraKit</td><td>1.1.6</td></tr>
              <tr><td class="check"><input type="checkbox" aria-label="选择 9"></td><td>9</td><td>应用列表</td><td></td><td></td><td><div class="app-icon"><svg><use href="#a-bluetooth"/></svg></div></td><td>com.huawei.synergy</td><td>HwSynergy</td><td>12.0.0.009</td></tr>
              <tr><td class="check"></td><td></td><td></td><td></td><td></td><td><div class="app-icon"><svg><use href="#a-orange"/></svg></div></td><td></td><td></td><td></td></tr>
            </tbody>
          </table>
          <span class="vbar"></span>
          <span class="hbar"></span>
        </div>
        <button class="drawer" aria-label="展开详情"><svg viewBox="0 0 23 96"><path d="M24 1L5 10.500Q1 12.500 1 16v64q0 3.500 4 5.500L24 95" fill="#fff" stroke="#dcdcdc" stroke-width="1.500"/><path d="M19 41v14l-9-7z" fill="#c0c0c0"/></svg></button>
      </div>
    </section>
  </main>

  <footer class="statusbar">
    <span>7.5.0.22</span><span>高性能</span><span>逻辑处理器：16 核</span>
    <label><span>CPU：</span><progress max="100" value="7"></progress></label>
    <label><span>内存 40G：</span><progress max="100" value="42"></progress></label>
  </footer>
</div>
</body>
</html>
```
FILE: styles.css
```css
* { box-sizing: border-box; }

body {
  margin: 0;
  font: 18px/24px "Open Sans", "Noto Sans CJK SC", sans-serif;
  color: #333;
  background: #fff;
}

ul { margin: 0; padding: 0; list-style: none; }
a { color: inherit; text-decoration: none; }
button { margin: 0; padding: 0; border: 0; background: none; font: inherit; color: inherit; }
svg { display: block; flex: none; }
.sprite { position: absolute; }
.ico { width: 24px; height: 24px; }
.ico18 { width: 18px; height: 18px; }

.app { display: flex; flex-direction: column; height: 100vh; overflow: hidden; }

/* Title bar */
.titlebar { display: flex; flex: none; height: 57px; background: #234460; color: #fff; }
.brand { display: flex; align-items: center; gap: 12px; width: 189px; padding: 0 0 2px 15px; }
.case-tab { display: flex; align-items: center; padding: 0 23px; background: #3a566f; font-size: 21px; }
.window-tools { display: flex; align-items: center; margin-left: auto; padding-right: 23px; }
.about { margin-right: 49px; }
.win { margin-right: 49px; }
.win:last-child { margin-right: 0; }
.win svg { width: 20px; height: 20px; }

.workspace { display: flex; flex: 1; min-height: 0; }

/* Text fields */
.field { display: flex; align-items: center; height: 50px; border: 2px solid #e0e0e0; border-radius: 10px; background: #fff; }
.field input { flex: 1; min-width: 0; padding: 0; border: 0; outline: 0; background: none; font: inherit; color: #333; }
.field input::placeholder { color: #c8c8c8; opacity: 1; }
.field .dark-hint::placeholder { color: #444; }
.blue { color: #0e8ee9; }

/* Sidebar */
.sidebar { display: flex; flex: none; flex-direction: column; width: 514px; border-right: 4px solid #f2f2f2; }
.side-search { flex: none; padding: 12px; border-bottom: 4px solid #f2f2f2; }
.side-search .field { gap: 11px; padding: 0 15px; }
.tree-area { position: relative; flex: 1; min-height: 0; overflow: hidden; }
.tree { padding-top: 2px; }
.tree ul { margin-left: 24px; }
.tree li { background: repeating-linear-gradient(#aaa 0 1px, transparent 1px 3px) 13px 0 / 1px 100% no-repeat; }
.tree ul > li:last-child, .tree > li { background-size: 1px 17px; }
.row { display: flex; align-items: center; height: 33px; padding-left: 7px; background: repeating-linear-gradient(90deg, #aaa 0 1px, transparent 1px 3px) 13px 17px / 13px 1px no-repeat; }
.leaf { padding-left: 34px; }
.toggle { width: 14px; height: 14px; margin-right: 13px; border: 2px solid #adadad; border-radius: 2px; background: #fff; font-size: 14px; font-weight: 700; line-height: 9px; color: #222; text-align: center; }
.node { display: flex; align-items: center; height: 30px; padding: 0 6px 0 4px; border-radius: 8px; white-space: nowrap; }
.node .ico { margin-right: 8px; }
.node span { padding-bottom: 2px; }
.selected { background: #b7dbf8; }
.count { display: inline-flex; gap: 4px; margin-left: 8px; }
.count b { font-weight: 400; }
.count em { font-style: normal; color: #ff4d4f; }
.collapse-all { position: absolute; top: 15px; right: 15px; display: grid; place-items: center; width: 39px; height: 39px; border-radius: 8px; background: #f2f2f2; }
.collapse-all svg { width: 24px; height: 28px; }

/* Document tabs */
.content { display: flex; flex: 1; flex-direction: column; min-width: 0; }
.tabbar { display: flex; flex: none; height: 54px; border-bottom: 2px solid #e0e0e0; }
.tabs { display: flex; flex: 1; justify-content: flex-end; min-width: 0; height: 54px; overflow: hidden; }
.tab { display: flex; flex: none; align-items: center; padding: 3px 21px 0 16px; border-bottom: 3px solid transparent; white-space: nowrap; }
.tab .ico { margin-right: 8px; }
.active { border-color: #0e8ee9; border-radius: 2px; color: #0e8ee9; }
.close { margin-left: 14px; color: #ff4d4f; }
.close svg { width: 16px; height: 16px; }
.tab-scroll { display: flex; align-items: center; gap: 20px; padding: 2px 10px 0; color: #0e8ee9; }
.tab-scroll svg { width: 10px; height: 16px; }
.off { opacity: .35; color: #0e8ee9; }

/* Toolbar */
.panel { position: relative; display: flex; flex: 1; flex-direction: column; min-height: 0; border-right: 2px solid #e0e0e0; }
.toolbar { display: flex; flex: none; align-items: center; height: 71px; padding: 0 4px 0 9px; border-bottom: 2px solid #e0e0e0; }
.table-search { width: 225px; margin-right: 6px; padding: 0 17px 0 15px; }
.tool-group { display: flex; }
.end { margin-left: auto; }
.tool { display: flex; align-items: center; gap: 10px; padding: 0 14px; white-space: nowrap; }
.tool svg { width: 20px; height: 20px; }
.dates { display: flex; gap: 9px; margin-left: 4px; }
.date { gap: 11px; width: 210px; padding: 0 18px 0 15px; }
.clear { width: 14px; height: 14px; }
.divider { width: 2px; height: 18px; margin: 0 12px 0 17px; background: #e8e8e8; }

/* Application table */
.grid { position: relative; flex: 1; min-height: 0; overflow: hidden; }
table { width: 100%; table-layout: fixed; border-spacing: 0; }
.c-check { width: 54px; }
.c-num { width: 57px; }
.c-src { width: 117px; }
.c-flag { width: 81px; }
.c-icon { width: 95px; }
.c-id { width: 451px; }
.c-name { width: 350px; }
th, td { padding: 0 0 0 8px; border-right: 2px solid #e0e0e0; border-bottom: 2px solid #e0e0e0; text-align: left; white-space: nowrap; }
th:last-child, td:last-child { border-right: 0; }
th { height: 50px; padding: 0 8px; font-weight: 700; }
th div { display: flex; align-items: center; justify-content: space-between; }
th svg { width: 10px; height: 14px; }
td { height: 92px; }
.check { padding: 0 0 0 13px; }
.hover td { background: #ececec; }
input[type="checkbox"] { display: block; width: 24px; height: 24px; margin: 0; appearance: none; border: 2px solid #e0e0e0; border-radius: 6px; background: transparent; }
.hover input[type="checkbox"] { border-color: #d6d6d6; }
input[type="checkbox"].all { border: 0; background: radial-gradient(circle, #fff 0 4px, #0e8ee9 5px); }
.app-icon { display: grid; width: 76px; height: 72px; }
.app-icon > * { grid-area: 1 / 1; width: 76px; height: 72px; }
.vip { display: flex; flex-direction: column; align-items: center; justify-content: center; padding-top: 2px; font-size: 20px; font-weight: 700; line-height: 22px; color: #fff; }
.vip small { display: flex; justify-content: space-between; width: 60px; font-size: 12px; line-height: 18px; }
.vip i { font-style: normal; }
.vbar { position: absolute; top: 4px; right: 5px; width: 4px; height: 60px; border-radius: 2px; background: #bbb; }
.hbar { position: absolute; bottom: 5px; left: 5px; width: calc(49% - 5px); height: 4px; border-radius: 2px; background: rgba(110, 110, 110, .45); }
.drawer { position: absolute; top: 50%; right: -2px; transform: translateY(-50%); }
.drawer svg { width: 24px; height: 96px; }

/* Status bar */
.statusbar { display: flex; flex: none; align-items: center; gap: 12px; height: 33px; padding: 0 8px 2px; background: #f2f2f2; color: #8c8c8c; white-space: nowrap; }
.statusbar span { padding-bottom: 2px; }
.statusbar label { display: flex; align-items: center; }
.statusbar label span { padding-right: 1px; }
progress { display: block; width: 108px; height: 24px; appearance: none; border: 2px solid #c0c0c0; border-radius: 3px; background: #e6e6e6; overflow: hidden; }
progress::-webkit-progress-bar { background: #e6e6e6; }
progress::-webkit-progress-value { background: #10c57b; }
```
